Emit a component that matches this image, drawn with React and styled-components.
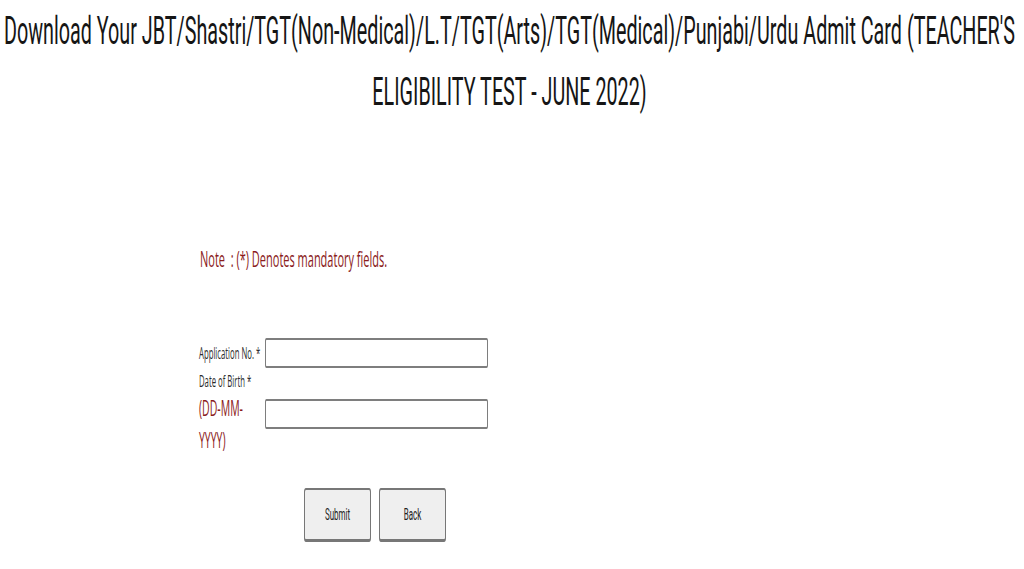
import React from "react";
import styled, { createGlobalStyle } from "styled-components";

const Global = createGlobalStyle`
  html, body { margin: 0; padding: 0; background: #ffffff; overflow: hidden; }
  body { font-family: "Open Sans", Arial, sans-serif; }
`;

/* The reference is a wide page photographed and squeezed to half its width */
const Page = styled.div`
  width: 2048px;
  transform: scaleX(0.5);
  transform-origin: 0 0;
  background: #fff;
`;

const Title = styled.h1`
  margin: 0;
  font-family: Roboto, "Liberation Sans", sans-serif;
  font-weight: 400;
  font-size: 39.5px;
  line-height: 61px;
  color: #151515;
  text-align: center;
  padding-right: 10px;
`;

const Form = styled.div`
  padding: 122px 0 0 398px;
  display: flex;
  flex-direction: column;
`;

const Note = styled.p`
  margin: 0 0 0 2px;
  font-family: "Open Sans", Arial, sans-serif;
  font-size: 22px;
  line-height: 28px;
  color: #8b1c1c;
`;

const Fields = styled.div`
  margin-top: 66px;
  display: grid;
  grid-template-columns: 130px 450px;
  column-gap: 2px;
  row-gap: 4px;
  align-items: center;
`;

const Label = styled.div`
  font-family: "Open Sans", Arial, sans-serif;
  font-size: 15.5px;
  line-height: 18px;
  color: #2a2a2a;
  display: flex;
  flex-direction: column;
`;

const Hint = styled.span`
  margin-top: 2px;
  font-size: 21px;
  line-height: 32px;
  color: #8b1c1c;
`;

const Input = styled.input`
  box-sizing: border-box;
  width: 446px;
  height: 30px;
  border: 2px solid #7e7e7e;
  border-radius: 3px;
  background: #fff;
  padding: 0 6px;
  outline: none;
`;

const Buttons = styled.div`
  margin: 32px 0 0 210px;
  display: flex;
  gap: 16px;
`;

const Button = styled.button`
  box-sizing: border-box;
  width: 134px;
  height: 54px;
  border: 2px solid #777;
  border-bottom-width: 3px;
  border-radius: 4px;
  background: #efefef;
  font-family: Roboto, "Liberation Sans", sans-serif;
  font-size: 16px;
  color: #222;
  cursor: pointer;
`;

export default function App() {
  return (
    <>
      <Global />
      <Page>
        <Title>
          Download Your JBT/Shastri/TGT(Non-Medical)/L.T/TGT(Arts)/TGT(Medical)/Punjabi/Urdu Admit Card (TEACHER'S
          <br />
          ELIGIBILITY TEST - JUNE 2022)
        </Title>
        <Form>
          <Note>Note&nbsp; : (*) Denotes mandatory fields.</Note>
          <Fields>
            <Label>Application No. *</Label>
            <Input type="text" />
            <Label>
              <span>Date of Birth *</span>
              <Hint>(DD-MM-YYYY)</Hint>
            </Label>
            <Input type="text" />
          </Fields>
          <Buttons>
            <Button>Submit</Button>
            <Button>Back</Button>
          </Buttons>
        </Form>
      </Page>
    </>
  );
}
